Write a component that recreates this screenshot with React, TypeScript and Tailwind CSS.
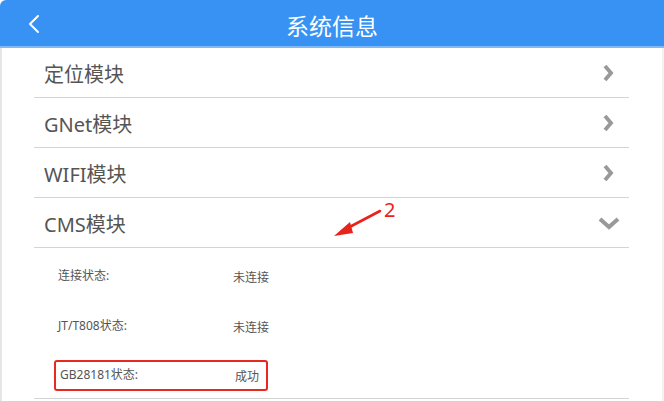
import { ChevronLeft } from 'lucide-react'

const modules = ['定位模块', 'GNet模块', 'WIFI模块']

const details = [
  { label: 'JT/T808状态:', value: '未连接' },
]

function Arrow({ down }: { down?: boolean }) {
  return down ? (
    <svg width="22" height="14" viewBox="0 0 22 14">
      <polyline points="2,3 11,11 20,3" fill="none" stroke="#999" strokeWidth="4" strokeLinejoin="miter" />
    </svg>
  ) : (
    <svg width="12" height="18" viewBox="0 0 12 18">
      <polyline points="3,2 9,9 3,16" fill="none" stroke="#999" strokeWidth="3.8" strokeLinejoin="miter" />
    </svg>
  )
}

export default function App() {
  return (
    <div
      className="w-[664px] h-[401px] overflow-hidden bg-white text-[#555]"
      style={{ fontFamily: '"Noto Sans", "Noto Sans CJK SC", sans-serif' }}
    >
      <header className="relative h-[48px] bg-[#3792f4] rounded-tl-[6px] border-b-2 border-[#7fb9f6] flex items-center justify-center pt-[6px]">
        <ChevronLeft size={32} strokeWidth={1.5} className="absolute left-[18px] top-[8px] text-white" />
        <h1 className="text-[23px] text-white">系统信息</h1>
      </header>

      <div className="relative h-[353px] border-l-2 border-[#e6e6e6] border-r-2 border-r-[#f2f2f2]">
        <div className="ml-[32px] w-[595px]">
          {modules.map((m) => (
            <div key={m} className="h-[50px] flex items-center justify-between border-b border-[#d4d4d4] pl-[10px] pr-[15px]">
              <span className="text-[20px] pt-[5px]">{m}</span>
              <Arrow />
            </div>
          ))}
          <div className="h-[50px] flex items-center justify-between border-b border-[#d4d4d4] pl-[10px] pr-[9px]">
            <span className="text-[20px] pt-[5px]">CMS模块</span>
            <Arrow down />
          </div>

          <div className="border-b border-[#d4d4d4]">
            <div className="h-[50px] flex items-center pl-[24px] text-[12px] pt-[6px]">
              <span className="w-[175px]">连接状态:</span>
              <span className="pt-[3px]">未连接</span>
            </div>
            {details.map((d) => (
              <div key={d.label} className="h-[50px] flex items-center pl-[24px] text-[12px] pt-[6px]">
                <span className="w-[175px]">{d.label}</span>
                <span className="pt-[3px]">{d.value}</span>
              </div>
            ))}
            <div className="h-[50px] flex items-center pl-[20px] text-[12px]">
              <div className="w-[214px] h-[31px] flex items-center pl-[4px] border-[2.5px] border-[#e62a22] rounded-[3px] mt-[4px]">
                <span className="w-[175px]">GB28181状态:</span>
                <span className="pt-[3px]">成功</span>
              </div>
            </div>
          </div>
        </div>

        {/* annotation arrow */}
        <svg className="absolute left-[328px] top-[150px]" width="80" height="45" viewBox="0 0 80 45">
          <path d="M50 13 L12 33" stroke="#e8231c" strokeWidth="2.6" strokeLinecap="round" />
          <path d="M4 38 L20 24 L23 35 Z" fill="#e8231c" />
        </svg>
        <span className="absolute left-[382px] top-[152px] text-[20px] leading-none text-[#e8231c]">2</span>
      </div>
    </div>
  )
}
